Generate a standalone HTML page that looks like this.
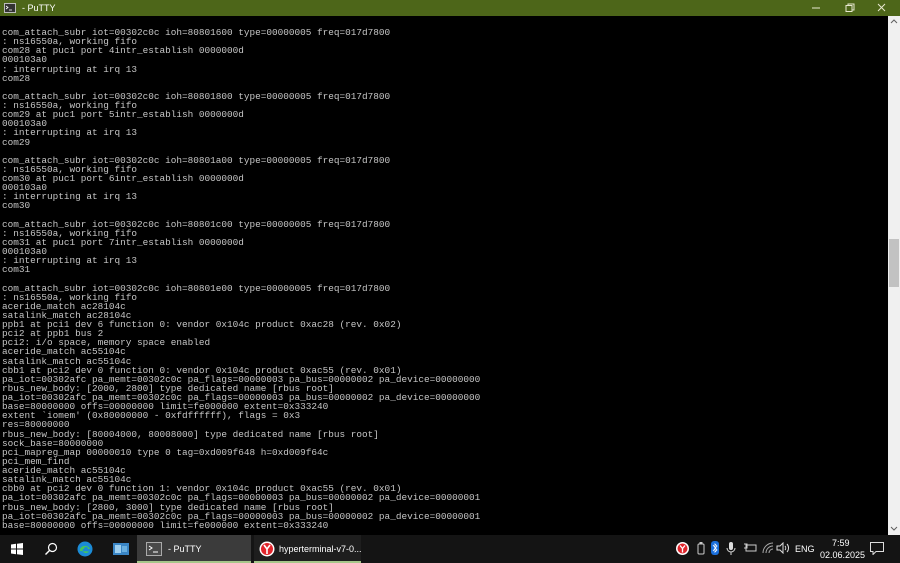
<!DOCTYPE html>
<html><head><meta charset="utf-8"><style>
*{margin:0;padding:0;box-sizing:border-box}
body{width:900px;height:563px;overflow:hidden;background:#000;position:relative;font-family:"Liberation Sans",sans-serif}
#title{position:absolute;left:0;top:0;width:900px;height:16px;background:#4d6619;color:#fff;font-size:9px}
#title .t{position:absolute;left:22px;top:3px}
#term{position:absolute;left:0;top:16px;width:888px;height:519px;background:#000}
pre{position:absolute;left:2px;top:12px;font-family:"Liberation Mono",monospace;font-size:9.4px;line-height:9.13px;color:#c6c6c6;white-space:pre}
#sb{position:absolute;left:888px;top:16px;width:12px;height:519px;background:#f0f0f0}
#thumb{position:absolute;left:889px;top:239px;width:10px;height:48px;background:#c2c2c2}
#task{position:absolute;left:0;top:535px;width:900px;height:28px;background:#141414;color:#fff;font-size:9px}
.btn{position:absolute;top:0;height:28px}
</style></head><body>
<div id="title">
<svg style="position:absolute;left:4px;top:3px" width="12" height="10"><rect x="0.5" y="0.5" width="11" height="9" fill="#333" stroke="#bbb"/><path d="M2 3l2 1.5L2 6M5 7h3" stroke="#fff" fill="none" stroke-width="0.8"/></svg>
<span class="t">- PuTTY</span>
<svg style="position:absolute;left:810px;top:3px" width="90" height="10"><path d="M2 5h8" stroke="#e8e8d0"/><rect x="36" y="2.5" width="6" height="6" fill="none" stroke="#e8e8d0"/><path d="M38 2.5V1h6v6h-2" fill="none" stroke="#e8e8d0"/><path d="M68 1l7 7M75 1l-7 7" stroke="#e8e8d0"/></svg>
</div>
<div id="term"><pre>com_attach_subr iot=00302c0c ioh=80801600 type=00000005 freq=017d7800
: ns16550a, working fifo
com28 at puc1 port 4intr_establish 0000000d
000103a0
: interrupting at irq 13
com28

com_attach_subr iot=00302c0c ioh=80801800 type=00000005 freq=017d7800
: ns16550a, working fifo
com29 at puc1 port 5intr_establish 0000000d
000103a0
: interrupting at irq 13
com29

com_attach_subr iot=00302c0c ioh=80801a00 type=00000005 freq=017d7800
: ns16550a, working fifo
com30 at puc1 port 6intr_establish 0000000d
000103a0
: interrupting at irq 13
com30

com_attach_subr iot=00302c0c ioh=80801c00 type=00000005 freq=017d7800
: ns16550a, working fifo
com31 at puc1 port 7intr_establish 0000000d
000103a0
: interrupting at irq 13
com31

com_attach_subr iot=00302c0c ioh=80801e00 type=00000005 freq=017d7800
: ns16550a, working fifo
aceride_match ac28104c
satalink_match ac28104c
ppb1 at pci1 dev 6 function 0: vendor 0x104c product 0xac28 (rev. 0x02)
pci2 at ppb1 bus 2
pci2: i/o space, memory space enabled
aceride_match ac55104c
satalink_match ac55104c
cbb1 at pci2 dev 0 function 0: vendor 0x104c product 0xac55 (rev. 0x01)
pa_iot=00302afc pa_memt=00302c0c pa_flags=00000003 pa_bus=00000002 pa_device=00000000
rbus_new_body: [2000, 2800] type dedicated name [rbus root]
pa_iot=00302afc pa_memt=00302c0c pa_flags=00000003 pa_bus=00000002 pa_device=00000000
base=80000000 offs=00000000 limit=fe000000 extent=0x333240
extent `iomem' (0x80000000 - 0xfdffffff), flags = 0x3
res=80000000
rbus_new_body: [80004000, 80008000] type dedicated name [rbus root]
sock_base=80000000
pci_mapreg_map 00000010 type 0 tag=0xd009f648 h=0xd009f64c
pci_mem_find
aceride_match ac55104c
satalink_match ac55104c
cbb0 at pci2 dev 0 function 1: vendor 0x104c product 0xac55 (rev. 0x01)
pa_iot=00302afc pa_memt=00302c0c pa_flags=00000003 pa_bus=00000002 pa_device=00000001
rbus_new_body: [2800, 3000] type dedicated name [rbus root]
pa_iot=00302afc pa_memt=00302c0c pa_flags=00000003 pa_bus=00000002 pa_device=00000001
base=80000000 offs=00000000 limit=fe000000 extent=0x333240</pre></div>
<div id="sb"></div><div id="thumb"></div>
<svg style="position:absolute;left:889px;top:18px" width="10" height="8"><path d="M2 5l3-3 3 3" stroke="#606060" fill="none"/></svg>
<svg style="position:absolute;left:889px;top:525px" width="10" height="8"><path d="M2 2l3 3 3-3" stroke="#606060" fill="none"/></svg>
<div id="task">
<svg style="position:absolute;left:11px;top:8px" width="12" height="12"><path d="M0 1.5L5 .8V5.5H0zM6 .7L12 0V5.5H6zM0 6.5H5V11.2L0 10.5zM6 6.5H12V12L6 11.3z" fill="#fff"/></svg>
<svg style="position:absolute;left:44px;top:7px" width="14" height="14"><circle cx="8.5" cy="5.5" r="4" stroke="#fff" fill="none" stroke-width="1.2"/><path d="M5.5 8.5L1.5 12.5" stroke="#fff" stroke-width="1.4"/></svg>
<svg style="position:absolute;left:77px;top:6px" width="16" height="16"><circle cx="8" cy="8" r="7.5" fill="#1b8bd6"/><path d="M3 10a5 4 0 1 1 10-2H6a3 2.5 0 0 0 6 2.5" fill="#44c65d"/><circle cx="9" cy="8" r="2" fill="#1b8bd6"/></svg>
<svg style="position:absolute;left:113px;top:8px" width="16" height="12"><rect width="16" height="12" fill="#3a86c6"/><rect x="2" y="2" width="6" height="8" fill="#9fd0f0"/><rect x="9" y="3" width="5" height="6" fill="#6ab0e0"/></svg>
<div class="btn" style="left:137px;width:114px;background:#3b3b3b;border-bottom:2px solid #a6c68a"></div>
<svg style="position:absolute;left:146px;top:7px" width="16" height="14"><rect x=".5" y=".5" width="15" height="13" fill="#4a4a4a" stroke="#aaa"/><path d="M3 4l3 2-3 2M7 10h5" stroke="#fff" fill="none"/></svg>
<span style="position:absolute;left:168px;top:9px">- PuTTY</span>
<div class="btn" style="left:254px;width:107px;background:#1e1e1e;border-bottom:2px solid #a6c68a"></div>
<svg style="position:absolute;left:259px;top:6px" width="16" height="16"><circle cx="8" cy="8" r="7.5" fill="#fff"/><circle cx="8" cy="8" r="6" fill="#e0252c"/><path d="M5 4l3 4 3-4M8 8v5" stroke="#fff" stroke-width="1.6" fill="none"/></svg>
<span style="position:absolute;left:279px;top:9px">hyperterminal-v7-0...</span>
<svg style="position:absolute;left:676px;top:7px" width="13" height="13"><circle cx="6.5" cy="6.5" r="6.5" fill="#fff"/><circle cx="6.5" cy="6.5" r="5" fill="#e0252c"/><path d="M4 3.5l2.5 3 2.5-3M6.5 6.5v4" stroke="#fff" stroke-width="1.3" fill="none"/></svg>
<svg style="position:absolute;left:696px;top:6px" width="10" height="15"><rect x="2" y="3" width="6" height="10" rx="1" fill="none" stroke="#ccc"/><rect x="3.5" y="1" width="3" height="2" fill="#ccc"/></svg>
<svg style="position:absolute;left:711px;top:6px" width="8" height="14"><rect width="8" height="14" rx="3" fill="#1a6fdc"/><path d="M2 4l4 5-2 2V3l2 2-4 5" stroke="#fff" stroke-width=".8" fill="none"/></svg>
<svg style="position:absolute;left:726px;top:6px" width="10" height="15"><rect x="3" y="1" width="4" height="8" rx="2" fill="#ddd"/><path d="M1 7a4 4 0 0 0 8 0M5 11v3" stroke="#ddd" fill="none"/></svg>
<svg style="position:absolute;left:743px;top:8px" width="14" height="10"><rect x="3" y="2" width="10" height="6" fill="none" stroke="#ccc"/><path d="M1 1h3v4H1" stroke="#ccc" fill="none"/></svg>
<svg style="position:absolute;left:762px;top:7px" width="12" height="12"><path d="M1 11a10 10 0 0 1 10-10M4 11a7 7 0 0 1 7-7M7 11a4 4 0 0 1 4-4" stroke="#aaa" fill="none"/></svg>
<svg style="position:absolute;left:776px;top:7px" width="15" height="12"><path d="M1 4h3l3-3v10L4 8H1z" fill="none" stroke="#ddd"/><path d="M9 4a3 3 0 0 1 0 4M11 2a6 6 0 0 1 0 8" stroke="#ddd" fill="none"/></svg>
<span style="position:absolute;left:795px;top:9px">ENG</span>
<span style="position:absolute;left:832px;top:3px">7:59</span>
<span style="position:absolute;left:820px;top:15px">02.06.2025</span>
<svg style="position:absolute;left:870px;top:7px" width="14" height="13"><path d="M.5.5h13v9H6l-3 3v-3H.5z" fill="none" stroke="#ddd"/></svg>
</div>
</body></html>
